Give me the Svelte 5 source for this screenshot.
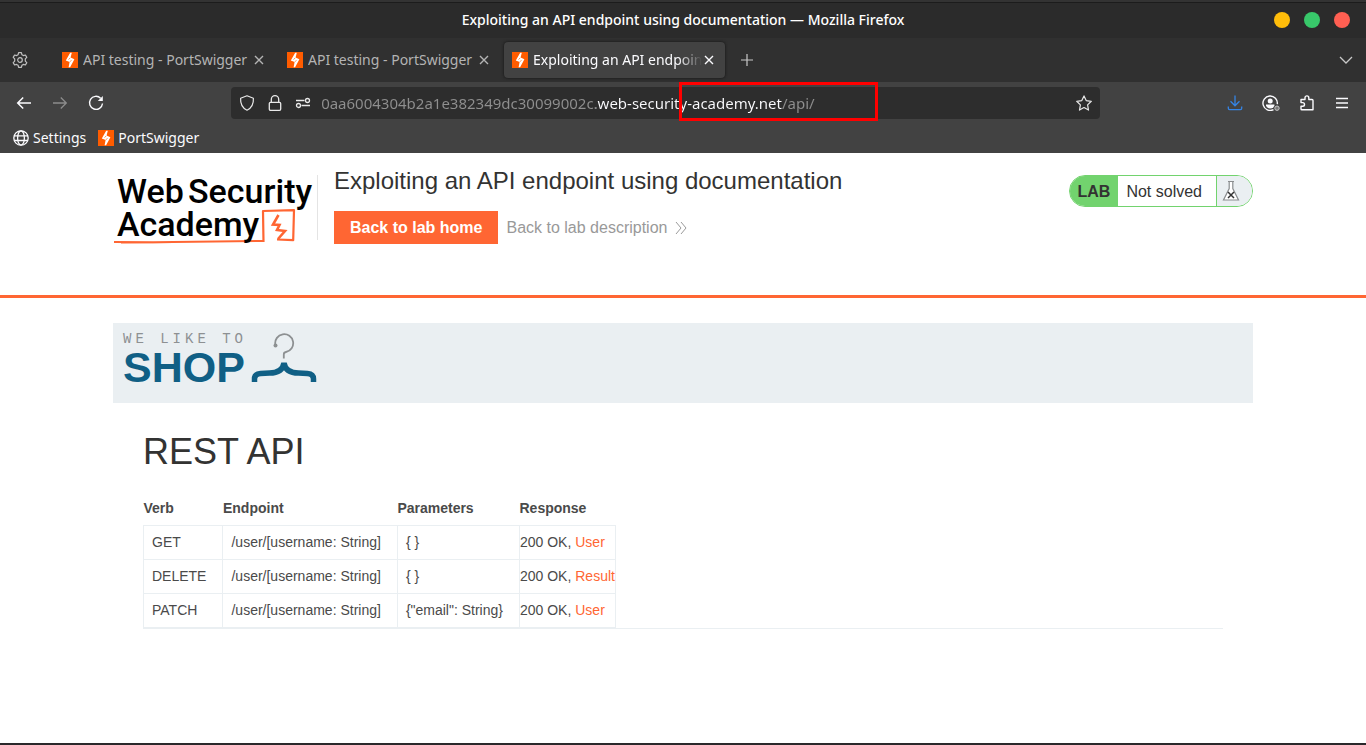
<script>
  const tabs = [
    { title: 'API testing - PortSwigger', active: false },
    { title: 'API testing - PortSwigger', active: false },
    { title: 'Exploiting an API endpoint using documentation', active: true }
  ];

  let url = $state('0aa6004304b2a1e382349dc30099002c.web-security-academy.net/api/');

  const endpoints = [
    { verb: 'GET', path: '/user/[username: String]', params: '{ }', result: 'User' },
    { verb: 'DELETE', path: '/user/[username: String]', params: '{ }', result: 'Result' },
    { verb: 'PATCH', path: '/user/[username: String]', params: '{"email": String}', result: 'User' }
  ];
</script>

{#snippet favicon()}
  <svg class="icon" viewBox="0 0 16 16" aria-hidden="true">
    <rect width="16" height="16" fill="#ff5c00" />
    <path d="M8.2 .8h1.6L8.6 5.6l3.8 1.6-4.3 8H6.6l1-5.2L3.8 8.4z" fill="#fff" />
    <path d="M8.2 5.9 6.6 7.6M9.4 8.2 8 9.8" stroke="#ff5c00" stroke-width=".7" />
  </svg>
{/snippet}

<div class="window">
  <header class="titlebar">
    <span class="window-title">Exploiting an API endpoint using documentation — Mozilla Firefox</span>
    <div class="window-controls">
      <button class="dot yellow" aria-label="Minimize"></button>
      <button class="dot green" aria-label="Maximize"></button>
      <button class="dot red" aria-label="Close window"></button>
    </div>
  </header>

  <nav class="tabbar" aria-label="Tabs">
    <button class="tool settings" aria-label="Tab settings">
      <svg class="icon" viewBox="0 0 16 16" fill="none" stroke="#c2c2c2" stroke-width="1.2" stroke-linejoin="round">
        <path d="M6.6.7h2.8l.5 2 1.5.9 2-.6 1.4 2.4L13.3 6.9v2.2l1.5 1.5-1.4 2.4-2-.6-1.5.9-.5 2H6.6l-.5-2-1.5-.9-2 .6-1.4-2.4 1.5-1.5V6.9L1.2 5.4 2.6 3l2 .6 1.500-.9z" />
        <circle cx="8" cy="8" r="2.3" />
      </svg>
    </button>
    {#each tabs as tab}
      <div class="tab" class:active={tab.active}>
        {@render favicon()}
        <button class="tab-title">{tab.title}</button>
        <button class="tab-close" aria-label="Close tab">
          <svg viewBox="0 0 10 10" stroke="currentColor" stroke-width="1.4"><path d="M1 1l8 8M9 1 1 9" /></svg>
        </button>
      </div>
    {/each}
    <button class="tool" aria-label="New tab">
      <svg class="icon" viewBox="0 0 16 16" stroke="#c8c8c8" stroke-width="1.2"><path d="M8 2v12M2 8h12" /></svg>
    </button>
    <button class="tool list-tabs" aria-label="List all tabs">
      <svg class="icon" viewBox="0 0 16 16" fill="none" stroke="#c8c8c8" stroke-width="1.3"><path d="M2 5l6 6 6-6" /></svg>
    </button>
  </nav>

  <div class="toolbar">
    <div class="tools left">
      <button class="tool" aria-label="Back">
        <svg class="icon" viewBox="0 0 16 16" fill="none" stroke="#fbfbfe" stroke-width="1.5"><path d="M15 8H2M7.2 2.5 1.7 8l5.5 5.5" /></svg>
      </button>
      <button class="tool" aria-label="Forward">
        <svg class="icon" viewBox="0 0 16 16" fill="none" stroke="#8c8c8c" stroke-width="1.3"><path d="M1 8h13M8.8 2.5 14.3 8l-5.5 5.5" /></svg>
      </button>
      <button class="tool" aria-label="Reload">
        <svg class="icon" viewBox="0 0 16 16" fill="none" stroke="#fbfbfe" stroke-width="1.4">
          <path d="M12.6 3.200A6.500 6.500 0 1 0 14.500 8.500" />
          <path d="M14.800 1v5H9.800z" fill="#fbfbfe" stroke="none" />
        </svg>
      </button>
    </div>

    <div class="urlbar">
      <svg class="icon" viewBox="0 0 16 16" fill="none" stroke="#e8e8e8" stroke-width="1.2" stroke-linejoin="round" aria-hidden="true">
        <path d="M8 .8 14.400 3.200c.3 5.300-1.500 9.600-6.400 12C3.100 12.800 1.300 8.500 1.600 3.200z" />
      </svg>
      <svg class="icon" viewBox="0 0 16 16" fill="none" stroke="#e8e8e8" stroke-width="1.3" aria-hidden="true">
        <rect x="2.3" y="7.3" width="11.4" height="8" rx="1.2" />
        <path d="M4.300 7V4.400a3.700 3.700 0 0 1 7.400 0V7" />
      </svg>
      <svg class="icon" viewBox="0 0 16 16" fill="none" stroke="#e8e8e8" stroke-width="1.3" aria-hidden="true">
        <path d="M1 5.500h8.500M6.500 10.500H15" />
        <circle cx="12.5" cy="5.5" r="2" />
        <circle cx="3.5" cy="10.5" r="2" />
      </svg>
      <input type="text" aria-label="Address" spellcheck="false" bind:value={url} />
      <button class="tool" aria-label="Bookmark this page">
        <svg class="icon" viewBox="0 0 16 16" fill="none" stroke="#e8e8e8" stroke-width="1.2" stroke-linejoin="round">
          <path d="M8 .9l2.200 4.700 5.100.7-3.700 3.600.9 5.200L8 12.600l-4.500 2.500.9-5.200L.7 6.300l5.100-.7z" />
        </svg>
      </button>
      <div class="marker"></div>
    </div>

    <div class="tools right">
      <button class="tool" aria-label="Downloads">
        <svg class="icon" viewBox="0 0 16 16" fill="none" stroke="#3584e4" stroke-width="1.3">
          <path d="M8 .5v10M3.500 6.300 8 10.800l4.500-4.500M1.300 11.500v1.800q0 1.300 1.300 1.300h10.800q1.300 0 1.300-1.300v-1.800" />
        </svg>
      </button>
      <button class="tool" aria-label="Account">
        <svg class="icon account" viewBox="0 0 18 16" fill="none" stroke="#fbfbfe" stroke-width="1.4">
          <path d="M15.300 9.200A7.200 7.200 0 1 0 11.500 14.600" />
          <circle cx="8.2" cy="6" r="2.5" fill="#fbfbfe" stroke="none" />
          <path d="M4 9.500h8.400v1.200l-1 1.500a5 5 0 0 1-6.400 0l-1-1.500z" fill="#fbfbfe" stroke="none" />
          <circle cx="15" cy="13.2" r="2.2" fill="#777" stroke="#c4c4c4" stroke-width="1" />
        </svg>
      </button>
      <button class="tool" aria-label="Extensions">
        <svg class="icon" viewBox="0 0 16 16" fill="none" stroke="#fbfbfe" stroke-width="1.4" stroke-linejoin="round">
          <path d="M2 4.500h4V2.800a1.900 1.900 0 0 1 3.800 0v1.700H13q1 0 1 1v9.200H2.800q-.8 0-.8-.8v-2.700h1.700a1.700 1.700 0 0 0 0-3.600H2z" />
        </svg>
      </button>
      <button class="tool" aria-label="Menu">
        <svg class="icon" viewBox="0 0 16 16" stroke="#fbfbfe" stroke-width="1.3"><path d="M2 3.500h12M2 8h12M2 12.500h12" /></svg>
      </button>
    </div>
  </div>

  <nav class="bookmarks" aria-label="Bookmarks">
    <a href="#settings">
      <svg class="icon" viewBox="0 0 16 16" fill="none" stroke="#fbfbfe" stroke-width="1.3" aria-hidden="true">
        <circle cx="8" cy="8" r="7.2" />
        <ellipse cx="8" cy="8" rx="3.4" ry="7.2" />
        <path d="M1.200 5.800h13.600M1.200 10.500h13.600" />
      </svg>
      Settings
    </a>
    <a href="#portswigger">{@render favicon()} PortSwigger</a>
  </nav>

  <main class="page">
    <section class="lab">
      <div class="container lab-row">
        <svg class="academy" viewBox="0 0 204 80" role="img" aria-label="Web Security Academy">
          <g fill="none" stroke="#ff6633" stroke-linejoin="round">
            <path d="M1 75 40 75.300 150 74" stroke-width="2" />
            <path d="M8 76 60 75.500" stroke-width="1" />
            <path d="M150.500 75 150 44l31-.8-.8 30-16.200-.7" stroke-width="2.2" />
            <path d="M165.500 48 160 57.500l6.500.5-2.500 5 8 1-7 8" stroke-width="2.6" stroke-linejoin="miter" />
          </g>
          <g font-family="Roboto, sans-serif" font-size="34" font-weight="500" fill="#000">
            <text x="4" y="36">Web</text>
            <text x="75" y="36">Security</text>
            <text x="4" y="69">Academy</text>
          </g>
        </svg>
        <div class="lab-info">
          <h2>Exploiting an API endpoint using documentation</h2>
          <div class="lab-links">
            <a class="home" href="#home">Back to lab home</a>
            <a class="description" href="#description">
              Back to lab description
              <svg viewBox="0 0 12 14" fill="none" stroke="#9a9a9a" aria-hidden="true"><path d="M1 1l5 6-5 6M6 1l5 6-5 6" /></svg>
            </a>
          </div>
        </div>
        <div class="status">
          <strong>LAB</strong>
          <span class="state">Not solved</span>
          <span class="flask">
            <svg viewBox="0 0 18 22" fill="#fff" stroke="#8a8d8f" stroke-width="1.2" aria-hidden="true">
              <path d="M6 1.500h6M7.200 1.500v7L1.500 20h15L10.800 8.500v-7" />
              <path d="M6 12l6 6M12 12l-6 6" stroke="#333" stroke-width="1.5" />
            </svg>
          </span>
        </div>
      </div>
    </section>

    <div class="container">
      <div class="shop-banner">
        <div class="shop-name">
          <span class="tagline">WE LIKE TO</span>
          <span class="shop">SHOP</span>
        </div>
        <svg class="hanger" viewBox="0 0 66 50" fill="none" aria-hidden="true">
          <circle cx="24.5" cy="12.500" r="2" fill="#8d9092" />
          <path d="M24.300 11.500a9 9 0 1 1 10.700 7.500q-2.200.4-2.200 2.500v4" stroke="#8d9092" stroke-width="1.8" />
          <path d="M3.500 49v-3q0-5 6-5.500l9-.5q13 0 14.500-10 1.500 10 14.500 10l9 .5q6 .5 6 5.500v3" stroke="#105f85" stroke-width="5.5" />
        </svg>
      </div>

      <article>
        <h1>REST API</h1>
        <table>
          <thead>
            <tr><th>Verb</th><th>Endpoint</th><th>Parameters</th><th>Response</th></tr>
          </thead>
          <tbody>
            {#each endpoints as row}
              <tr>
                <td>{row.verb}</td>
                <td>{row.path}</td>
                <td>{row.params}</td>
                <td class="response">200 OK, <a href="#{row.result}">{row.result}</a></td>
              </tr>
            {/each}
          </tbody>
        </table>
      </article>
    </div>
  </main>
</div>

<style>
  :global(body) {
    margin: 0;
    background: #fff;
  }

  * {
    box-sizing: border-box;
  }

  button {
    border: 0;
    padding: 0;
    background: none;
    color: inherit;
    font: inherit;
  }

  a {
    text-decoration: none;
  }

  .window {
    display: flex;
    flex-direction: column;
    min-height: 100vh;
    border-bottom: 2px solid #2a282b;
    font-family: "Noto Sans", sans-serif;
    font-size: 14px;
    line-height: 20px;
  }

  .icon {
    display: block;
    flex: none;
    width: 16px;
    height: 16px;
  }

  .tool {
    display: block;
    flex: none;
  }

  .titlebar {
    display: grid;
    grid-template-columns: 1fr auto 1fr;
    align-items: center;
    height: 38px;
    padding: 0 16px;
    border-top: 2px solid #333;
    background: #2b2b2b;
    box-shadow: inset 0 1px #1c1c1c;
    color: #fff;
  }

  .window-title {
    grid-column: 2;
    font-weight: 500;
  }

  .window-controls {
    display: flex;
    justify-content: flex-end;
    gap: 14px;
  }

  .dot {
    width: 16px;
    height: 16px;
    border-radius: 50%;
  }

  .yellow { background: #ffbd0a; }
  .green { background: #38c86a; }
  .red { background: #ff5f52; }

  .tabbar {
    display: flex;
    align-items: center;
    height: 44px;
    padding: 0 12px;
    background: #303030;
    color: #b4b4b4;
  }

  .settings {
    margin-right: 26px;
  }

  .tab {
    display: flex;
    align-items: center;
    width: 221px;
    height: 36px;
    margin-right: 4px;
    padding: 0 11px 0 8px;
    border-radius: 4px;
  }

  .tab.active {
    margin-right: 14px;
    background: #424242;
    box-shadow: 0 0 3px #111;
    color: #fbfbfe;
  }

  .tab-title {
    flex: 1;
    min-width: 0;
    margin-left: 5px;
    overflow: hidden;
    line-height: 22px;
    text-align: left;
    white-space: nowrap;
  }

  .active .tab-title {
    mask-image: linear-gradient(to left, transparent, #000 24px);
  }

  .tab-close {
    flex: none;
    width: 10px;
    height: 10px;
    margin-left: 2px;
  }

  .tab-close svg {
    display: block;
  }

  .list-tabs {
    margin-left: auto;
  }

  .toolbar {
    display: grid;
    grid-template-columns: auto 6fr 41fr 6fr auto;
    align-items: center;
    height: 42px;
    padding: 0 16px;
    background: #424242;
  }

  .tools {
    display: flex;
    align-items: center;
    gap: 20px;
  }

  .tools.right {
    grid-column: 5;
    gap: 19px;
  }

  .account {
    width: 18px;
  }

  .urlbar {
    position: relative;
    grid-column: 3;
    display: flex;
    align-items: center;
    gap: 12px;
    height: 32px;
    padding: 0 8px;
    border-radius: 4px;
    background: #2d2d2d;
  }

  /* The host part of the address is lit, the rest is dimmed. */
  .urlbar input {
    flex: 1;
    min-width: 0;
    height: 24px;
    margin-left: -2px;
    padding: 0;
    border: 0;
    outline: 0;
    background: linear-gradient(to right, #8f8f8f 275px, #fbfbfe 275px, #fbfbfe 461px, #8f8f8f 461px);
    background-clip: text;
    color: transparent;
    caret-color: #fbfbfe;
    font: inherit;
    font-size: 15px;
  }

  .marker {
    position: absolute;
    top: -5px;
    left: 448px;
    width: 199px;
    height: 39px;
    border: 3px solid #f00;
    pointer-events: none;
  }

  .bookmarks {
    display: flex;
    align-items: center;
    gap: 12px;
    height: 29px;
    padding: 0 13px 2px;
    background: #424242;
  }

  .bookmarks a {
    display: flex;
    align-items: center;
    gap: 4px;
    color: #fbfbfe;
  }

  .page {
    flex: 1;
    background: #fff;
    color: #333332;
    font-family: "Liberation Sans", Arial, sans-serif;
  }

  .container {
    max-width: 1140px;
    margin: 0 auto;
  }

  .lab {
    padding: 14px 0 48px;
    border-bottom: 3px solid #ff6633;
  }

  .lab-row {
    display: flex;
    align-items: flex-start;
  }

  .academy {
    flex: none;
    width: 204px;
    height: 80px;
    overflow: visible;
  }

  .lab-info {
    flex: 1;
    position: relative;
    padding-left: 17px;
  }

  .lab-info::before {
    content: "";
    position: absolute;
    top: 8px;
    left: 0;
    width: 1px;
    height: 65px;
    background: #e4e4e4;
  }

  h2 {
    margin: 0 0 16px;
    font-size: 24px;
    font-weight: 400;
    line-height: 28px;
  }

  .lab-links {
    display: flex;
    align-items: center;
    gap: 8px;
    font-size: 16px;
  }

  .home {
    padding: 0 16px;
    background: #ff6633;
    color: #fff;
    font-weight: 700;
    line-height: 33px;
  }

  .description {
    display: flex;
    align-items: center;
    gap: 8px;
    color: #999;
  }

  .description svg {
    width: 12px;
    height: 14px;
  }

  .status {
    display: flex;
    height: 32px;
    margin-top: 8px;
    overflow: hidden;
    border: 1px solid #72d36e;
    border-radius: 16px;
    font-size: 16px;
    line-height: 31px;
  }

  .status strong {
    padding: 0 8px;
    background: #72d36e;
  }

  .state {
    padding: 0 14px 0 8px;
  }

  .flask {
    display: flex;
    align-items: center;
    padding: 0 12px 0 5px;
    border-left: 1px solid #72d36e;
    background: #eaeff2;
  }

  .flask svg {
    width: 18px;
    height: 22px;
  }

  .shop-banner {
    display: flex;
    gap: 9px;
    height: 80px;
    margin-top: 25px;
    padding: 10px;
    background: #eaeff2;
  }

  .shop-name {
    display: flex;
    flex-direction: column;
    width: 119px;
    white-space: nowrap;
  }

  .tagline {
    color: #8d9092;
    font-family: "Liberation Mono", monospace;
    font-size: 14px;
    letter-spacing: 4px;
    line-height: 12px;
  }

  .shop {
    color: #105f85;
    font-size: 43px;
    font-weight: 700;
    line-height: 44px;
  }

  .hanger {
    width: 66px;
    height: 50px;
  }

  article {
    margin: 25px 30px 0;
    border-bottom: 1px solid #eaeff2;
  }

  h1 {
    margin: 0 0 15px;
    font-size: 36px;
    font-weight: 400;
    line-height: 48px;
  }

  table {
    border-collapse: collapse;
    color: #4a4a4a;
    font-size: 14px;
    line-height: 17px;
  }

  th {
    height: 34px;
    padding: 2px 0 0;
    text-align: left;
  }

  td {
    height: 34px;
    padding: 0 16px 0 8px;
    border: 1px solid #eaeff2;
  }

  .response {
    padding: 0;
  }

  .response a {
    color: #ff6633;
  }
</style>
